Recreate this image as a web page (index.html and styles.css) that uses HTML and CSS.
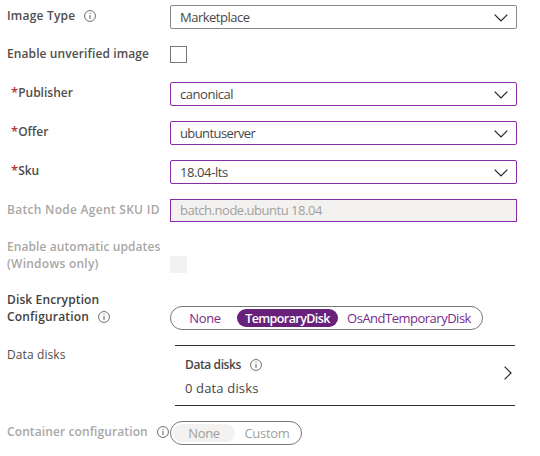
FILE: index.html
```html
<!DOCTYPE html>
<html lang="en">
<head>
<meta charset="utf-8">
<title>Pool image configuration</title>
<link rel="stylesheet" href="styles.css">
</head>
<body>
<svg class="defs" width="0" height="0" aria-hidden="true">
  <symbol id="info" viewBox="0 0 12 12"><circle cx="6" cy="6" r="5.45" fill="none" stroke="currentColor" stroke-width="0.9"/><path d="M6 5v4M6 2.9v1.1" fill="none" stroke="currentColor" stroke-width="1"/></symbol>
  <symbol id="down" viewBox="0 0 14 8"><path d="M.7.7L7 7 13.300.7" fill="none" stroke="#222" stroke-width="1.2"/></symbol>
  <symbol id="right" viewBox="0 0 8 14"><path d="M.6.6L7 7 .6 13.400" fill="none" stroke="#222" stroke-width="1.2"/></symbol>
</svg>
<form class="form">
  <div class="row r-type"><div class="label"><span class="t-type">Image Type</span><svg class="info"><use href="#info"/></svg></div>
    <div class="select gray"><span class="t-market">Marketplace</span><svg class="down"><use href="#down"/></svg></div></div>
  <div class="row r-unverified"><div class="label"><span class="t-unverified">Enable unverified image</span></div><div class="check"></div></div>
  <div class="row r-pick"><div class="label required"><b>*</b><span class="t-publisher">Publisher</span></div>
    <div class="select"><span class="t-canonical">canonical</span><svg class="down"><use href="#down"/></svg></div></div>
  <div class="row r-pick"><div class="label required"><b>*</b><span class="t-offer">Offer</span></div>
    <div class="select"><span class="t-ubuntu">ubuntuserver</span><svg class="down"><use href="#down"/></svg></div></div>
  <div class="row r-pick"><div class="label required"><b>*</b><span class="t-sku">Sku</span></div>
    <div class="select"><span class="t-lts">18.04-lts</span><svg class="down"><use href="#down"/></svg></div></div>
  <div class="row r-pick"><div class="label muted"><span class="t-agent">Batch Node Agent SKU ID</span></div>
    <div class="select disabled"><span class="t-node">batch.node.ubuntu 18.04</span></div></div>
  <div class="row r-updates"><div class="label muted"><span class="t-auto">Enable automatic updates</span><br><span class="t-win">(Windows only)</span></div><div class="check off"></div></div>
  <div class="row r-disk"><div class="label dark"><span class="t-disk">Disk Encryption</span><br><span class="t-config">Configuration</span><svg class="info"><use href="#info"/></svg></div>
    <div class="pills wide"><span class="pill"><span class="t-none">None</span></span><span class="pill on"><span class="t-temp">TemporaryDisk</span></span><span class="pill"><span class="t-os">OsAndTemporaryDisk</span></span></div></div>
  <div class="row r-data"><div class="label plain"><span class="t-data">Data disks</span></div>
    <div class="panel"><div><div class="panel-title"><span class="t-ptitle">Data disks</span><svg class="info"><use href="#info"/></svg></div><div class="panel-value"><span class="t-pvalue">0 data disks</span></div></div><svg class="right"><use href="#right"/></svg></div></div>
  <div class="row r-container"><div class="label muted"><span class="t-container">Container configuration</span><svg class="info"><use href="#info"/></svg></div>
    <div class="pills narrow"><span class="pill"><span class="t-none">None</span></span><span class="pill"><span class="t-custom">Custom</span></span></div></div>
</form>
</body>
</html>
```
FILE: styles.css
```css
* { box-sizing: border-box; }
body { margin: 0; background: #fff; color: #484644; font: 13px/17px "Open Sans", "Noto Sans", sans-serif; }
.defs { display: block; }
.form { width: 540px; height: 456px; }
.row { display: grid; grid-template-columns: 170px 347px; align-items: start; height: 39px; }
.r-type { height: 38px; }
.r-updates { height: 53px; }
.r-disk { height: 54px; }
.r-data { height: 73px; }
.r-container { height: 43px; }
.label { padding: 7px 0 0 7px; font-size: 12px; font-weight: 600; white-space: nowrap; color: #504e4c; }
.r-updates .label, .r-disk .label { padding-top: 5px; }
.r-data .label { padding-top: 6px; }
.r-container .label { padding-top: 10px; }
.label.required { padding-left: 11px; }
.required b { color: #b0343a; font-size: 13px; font-weight: 600; }
.label.muted { color: #a9a7a5; }
.label.dark { color: #444240; }
.label.plain { font-weight: 400; }
.info { width: 12px; height: 12px; margin-left: 9px; vertical-align: -2px; color: #605e5c; }
.select { display: flex; align-items: center; justify-content: space-between; height: 24px; margin-top: 5px; padding: 1px 8px 0 9px; border: 1px solid #8a2da5; border-radius: 2px; }
.select.gray { border-color: #8a8886; }
.select.disabled { height: 23px; padding-top: 0; border-radius: 0; background: #f3f2f1; color: #a19f9d; }
.down { width: 14px; height: 8px; }
.check { width: 17px; height: 17px; margin-top: 8px; border: 1px solid #777; }
.check.off { margin-top: 23px; border: 0; background: #f2f2f2; }
.pills { display: grid; height: 24px; padding: 2px; border: 1px solid #777; border-radius: 12px; color: #7a2a8c; }
.wide { width: 313px; margin-top: 20px; grid-template-columns: 64px 101px 1fr; }
.narrow { width: 132px; margin-top: 8px; grid-template-columns: 62px 1fr; color: #a19f9d; }
.pill { display: flex; align-items: center; justify-content: center; height: 18px; border-radius: 9px; }
.pill.on { background: #68217a; color: #fff; font-size: 12.5px; font-weight: 600; }
.narrow .pill:first-child { background: #f3f2f1; }
.panel { display: flex; justify-content: space-between; align-items: center; width: 340px; height: 61px; margin: 5px 0 0 5px; padding: 1px 3px 0 10px; border: solid #323130; border-width: 1px 0; }
.panel-title { font-size: 12px; font-weight: 600; }
.panel-value { margin-top: 7px; }
.right { width: 8px; height: 14px; margin-top: -6px; }

.t-type { letter-spacing: .2px; }
.t-market { letter-spacing: -.5px; }
.t-unverified { letter-spacing: .1px; }
.t-canonical { letter-spacing: -.45px; }
.t-ubuntu { letter-spacing: -.6px; }
.t-lts { letter-spacing: -.4px; }
.t-agent { letter-spacing: .28px; }
.t-node { letter-spacing: -.48px; }
.t-auto { letter-spacing: .08px; }
.t-win { letter-spacing: .25px; }
.t-disk { letter-spacing: .13px; }
.t-config { letter-spacing: .18px; }
.t-none { letter-spacing: -.4px; }
.t-temp { letter-spacing: -.58px; }
.t-os { letter-spacing: -.5px; }
.t-custom { letter-spacing: -.3px; }
.t-data { letter-spacing: .1px; }
.t-ptitle { letter-spacing: -.4px; }
.t-pvalue { letter-spacing: .15px; }
.t-container { letter-spacing: .1px; }
```
